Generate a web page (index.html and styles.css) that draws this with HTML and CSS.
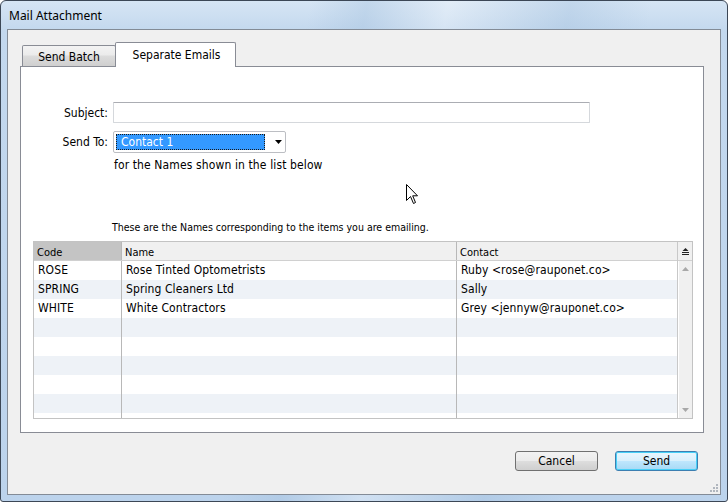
FILE: index.html
```html
<!DOCTYPE html>
<html>
<head>
<meta charset="utf-8">
<link rel="stylesheet" href="styles.css">
</head>
<body>
<div class="window">
  <div class="titlebar">Mail Attachment</div>
  <div class="client">
    <div class="tabstrip">
      <div class="tab">Send Batch</div>
      <div class="tab tab-active">Separate Emails</div>
    </div>
    <div class="panel">
      <div class="form-row">
        <label class="label">Subject:</label>
        <div class="textbox"></div>
      </div>
      <div class="form-row row-sendto">
        <label class="label">Send To:</label>
        <div class="combo">
          <div class="combo-value">Contact 1</div>
          <svg class="combo-arrow" width="8" height="4" viewBox="0 0 8 4"><path d="M0 0H7L3.5 4Z" fill="#000"/></svg>
        </div>
      </div>
      <div class="hint">for the Names shown in the list below</div>
      <div class="instruction">These are the Names corresponding to the items you are emailing.</div>
      <div class="grid">
        <div class="grid-main">
          <div class="grow ghead">
            <div class="cell c-code sorted">Code</div>
            <div class="cell c-name">Name</div>
            <div class="cell c-contact">Contact</div>
          </div>
          <div class="grow"><div class="cell c-code">ROSE</div><div class="cell c-name">Rose Tinted Optometrists</div><div class="cell c-contact">Ruby &lt;rose@rauponet.co&gt;</div></div>
          <div class="grow alt"><div class="cell c-code">SPRING</div><div class="cell c-name">Spring Cleaners Ltd</div><div class="cell c-contact">Sally</div></div>
          <div class="grow"><div class="cell c-code">WHITE</div><div class="cell c-name">White Contractors</div><div class="cell c-contact">Grey &lt;jennyw@rauponet.co&gt;</div></div>
          <div class="grow alt"><div class="cell c-code"></div><div class="cell c-name"></div><div class="cell c-contact"></div></div>
          <div class="grow"><div class="cell c-code"></div><div class="cell c-name"></div><div class="cell c-contact"></div></div>
          <div class="grow alt"><div class="cell c-code"></div><div class="cell c-name"></div><div class="cell c-contact"></div></div>
          <div class="grow"><div class="cell c-code"></div><div class="cell c-name"></div><div class="cell c-contact"></div></div>
          <div class="grow alt"><div class="cell c-code"></div><div class="cell c-name"></div><div class="cell c-contact"></div></div>
          <div class="grow"><div class="cell c-code"></div><div class="cell c-name"></div><div class="cell c-contact"></div></div>
        </div>
        <div class="vscroll">
          <div class="vs-head">
            <svg width="7" height="7" viewBox="0 0 7 7"><path d="M3.5 0L6.5 3H0.5Z" fill="#222"/><rect x="0" y="4" width="7" height="1" fill="#222"/><rect x="0" y="6" width="7" height="1" fill="#222"/></svg>
          </div>
          <div class="vs-track">
            <svg width="7" height="4" viewBox="0 0 7 4"><path d="M3.5 0L7 4H0Z" fill="#a8a8a8"/></svg>
            <svg width="7" height="4" viewBox="0 0 7 4"><path d="M0 0H7L3.5 4Z" fill="#a8a8a8"/></svg>
          </div>
        </div>
      </div>
    </div>
    <div class="buttons">
      <div class="btn">Cancel</div>
      <div class="btn btn-default">Send</div>
    </div>
    <div class="grip">
      <svg width="9" height="9" viewBox="0 0 9 9" fill="#b0b6be"><rect x="7" y="1" width="2" height="2"/><rect x="4" y="4" width="2" height="2"/><rect x="7" y="4" width="2" height="2"/><rect x="1" y="7" width="2" height="2"/><rect x="4" y="7" width="2" height="2"/><rect x="7" y="7" width="2" height="2"/></svg>
    </div>
  </div>
  <svg class="cursor" width="13" height="20" viewBox="0 0 13 20"><path d="M0.5 0.5V16.5L4.5 12.5L7.5 19.5L9.5 18.5L6.7 11.8H11.5Z" fill="#fff" stroke="#000" stroke-width="1"/></svg>
</div>
</body>
</html>
```
FILE: styles.css
```css
* { box-sizing: border-box; }
html, body { margin: 0; padding: 0; }
body {
  width: 728px;
  height: 502px;
  overflow: hidden;
  background: #fff;
  font-family: "DejaVu Sans Condensed", "DejaVu Sans", sans-serif;
  font-size: 11px;
  color: #000;
}
.window {
  position: relative;
  width: 728px;
  height: 502px;
  border: 1px solid #3c4756;
  border-radius: 6px 6px 3px 3px;
  background:
    linear-gradient(100deg, rgba(255,255,255,0) 0%, rgba(255,255,255,0) 38%, rgba(160,190,220,0.35) 45%, rgba(255,255,255,0.3) 55%, rgba(160,190,220,0.35) 70%, rgba(255,255,255,0) 80%),
    linear-gradient(180deg, #d6e5f4 0%, #c3d8ee 30px, #bcd3ec 100%);
  padding: 0 6px 6px 6px;
  display: flex;
  flex-direction: column;
}
.titlebar {
  height: 28px;
  padding: 6px 0 0 2px;
  font-family: "Noto Sans", "Open Sans", sans-serif;
  font-size: 12px;
  color: #000;
}
.client {
  position: relative;
  flex: 1;
  border: 1px solid #838b96;
  background: #f0f0f0;
  padding: 12px 16px 0 12px;
  display: flex;
  flex-direction: column;
}
.tabstrip {
  display: flex;
  align-items: flex-end;
  height: 24px;
  padding-left: 2px;
}
.tab {
  width: 94px;
  height: 21px;
  border: 1px solid #898c95;
  border-bottom: none;
  border-radius: 2px 2px 0 0;
  background: linear-gradient(180deg, #f3f3f3 0%, #ebebeb 45%, #dcdcdc 50%, #cfcfcf 100%);
  text-align: center;
  font-size: 12px;
  line-height: 20px;
  padding-top: 1px;
}
.tab-active {
  width: 121px;
  height: 25px;
  margin-left: -1px;
  margin-bottom: -1px;
  background: #fff;
  position: relative;
  z-index: 1;
  line-height: 21px;
  padding: 2px 0 0 2px;
}
.panel {
  height: 367px;
  border: 1px solid #898c95;
  background: #fff;
  padding: 35px 0 0 0;
  display: flex;
  flex-direction: column;
}
.form-row {
  display: flex;
  align-items: center;
  gap: 5px;
}
.row-sendto { margin-top: 8px; }
.label {
  width: 87px;
  text-align: right;
  font-size: 12px;
}
.textbox {
  width: 477px;
  height: 21px;
  border: 1px solid #d5d8dc;
  border-top-color: #abadb3;
  border-radius: 1px;
  background: #fff;
}
.combo {
  width: 173px;
  height: 22px;
  border: 1px solid #bcbec3;
  border-radius: 2px;
  background: #fff;
  display: flex;
  align-items: center;
  padding: 2px;
}
.combo-value {
  width: 150px;
  height: 16px;
  background: #3399ff;
  border: 1px dotted #1a1a1a;
  color: #fff;
  font-size: 12px;
  line-height: 14px;
  padding-left: 4px;
}
.combo-arrow { margin-left: 10px; }
.hint {
  margin: 5px 0 0 93px;
  font-size: 12px;
  line-height: 14px;
  letter-spacing: 0.12px;
}
.instruction {
  margin: 49px 0 0 91px;
  font-size: 10.5px;
  line-height: 13px;
}
.grid {
  margin: 7px 0 0 12px;
  width: 660px;
  height: 178px;
  border: 1px solid #c3c3c3;
  display: flex;
  overflow: hidden;
}
.grid-main { width: 643px; overflow: hidden; }
.grow {
  display: flex;
  height: 19px;
  background: #fff;
}
.grow.alt { background: #eef2f7; }
.ghead { background: #f0f0f0; border-bottom: 1px solid #d0d0d0; height: 19px; }
.cell {
  height: 100%;
  padding-left: 4px;
  font-size: 12px;
  line-height: 19px;
  white-space: nowrap;
  overflow: hidden;
  letter-spacing: 0.1px;
}
.ghead .cell { font-size: 11px; line-height: 18px; padding: 2px 0 0 3px; letter-spacing: 0; }
.c-code { width: 88px; border-right: 1px solid #b8b8b8; }
.c-name { width: 335px; border-right: 1px solid #b8b8b8; }
.c-contact { width: 220px; }
.sorted { background: #c4c4c4; }
.vscroll {
  width: 15px;
  border-left: 1px solid #c8c8c8;
  background: #f0f0f0;
  display: flex;
  flex-direction: column;
}
.vs-head {
  height: 19px;
  border-bottom: 1px solid #d0d0d0;
  display: flex;
  align-items: center;
  justify-content: center;
}
.vs-track {
  flex: 1;
  display: flex;
  flex-direction: column;
  justify-content: space-between;
  align-items: center;
  padding: 6px 0 6px 0;
  border-left: 1px solid #fff;
}
.buttons {
  display: flex;
  justify-content: flex-end;
  gap: 17px;
  margin-top: 18px;
  padding-right: 6px;
}
.btn {
  width: 83px;
  height: 20px;
  border: 1px solid #707070;
  border-radius: 3px;
  background: linear-gradient(180deg, #f2f2f2 0%, #ebebeb 48%, #dddddd 52%, #cfcfcf 100%);
  text-align: center;
  font-size: 12px;
  line-height: 19px;
}
.btn-default {
  border-color: #3c7fb1;
  box-shadow: inset 0 0 0 1px #48d0f7;
  background: linear-gradient(180deg, #eaf6fd 0%, #d9f0fc 48%, #bee6fd 52%, #a7d9f5 100%);
}
.grip {
  position: absolute;
  right: 2px;
  bottom: 2px;
  line-height: 0;
}
.cursor {
  position: absolute;
  left: 405px;
  top: 183px;
}
```
